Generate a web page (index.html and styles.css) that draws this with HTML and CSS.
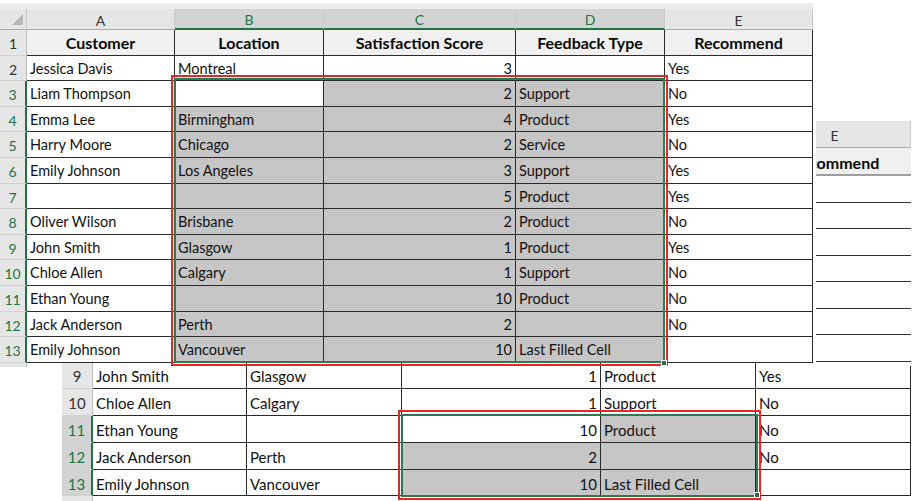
FILE: index.html
```html
<!DOCTYPE html>
<html lang="en">
<head>
<meta charset="utf-8">
<title>Excel selection composite</title>
<link rel="stylesheet" href="styles.css">
</head>
<body>
<div class="canvas">

  <!-- back screenshot (mostly hidden behind the top one) -->
  <div class="shot back-shot">
    <div class="grid back-grid">
      <div class="cell ch">E</div>
      <div class="cell th th-back">Recommend</div>
      <div class="cell brow"></div>
      <div class="cell brow"></div>
      <div class="cell brow"></div>
      <div class="cell brow"></div>
      <div class="cell brow"></div>
      <div class="cell brow"></div>
      <div class="cell brow"></div>
      <div class="cell brow stub-back"></div>
    </div>
  </div>

  <!-- bottom screenshot -->
  <div class="shot bottom-shot">
    <div class="grid bottom-grid">
      <div class="cell rh">9</div><div class="cell">John Smith</div><div class="cell">Glasgow</div><div class="cell num">1</div><div class="cell">Product</div><div class="cell">Yes</div>
      <div class="cell rh">10</div><div class="cell">Chloe Allen</div><div class="cell">Calgary</div><div class="cell num">1</div><div class="cell">Support</div><div class="cell">No</div>
      <div class="cell rh on">11</div><div class="cell">Ethan Young</div><div class="cell"></div><div class="cell num">10</div><div class="cell sel">Product</div><div class="cell">No</div>
      <div class="cell rh on">12</div><div class="cell">Jack Anderson</div><div class="cell">Perth</div><div class="cell num sel">2</div><div class="cell sel"></div><div class="cell">No</div>
      <div class="cell rh on">13</div><div class="cell">Emily Johnson</div><div class="cell">Vancouver</div><div class="cell num sel">10</div><div class="cell sel">Last Filled Cell</div><div class="cell"></div>
      <div class="cell rh stub"></div><div class="rest"></div>
    </div>
    <div class="redbox red-bottom"></div>
    <div class="greenbox green-bottom"></div>
    <div class="handle handle-bottom"></div>
  </div>

  <!-- top screenshot -->
  <div class="shot top-shot">
    <div class="grid top-grid">
      <div class="band"></div>
      <div class="cell ch corner"><svg width="11" height="11" viewBox="0 0 11 11"><polygon points="11,0 11,11 0,11" fill="#b8b8b8"/></svg></div>
      <div class="cell ch">A</div><div class="cell ch on">B</div><div class="cell ch on">C</div><div class="cell ch on">D</div><div class="cell ch">E</div>

      <div class="cell rh">1</div><div class="cell th">Customer</div><div class="cell th">Location</div><div class="cell th">Satisfaction Score</div><div class="cell th">Feedback Type</div><div class="cell th">Recommend</div>
      <div class="cell rh">2</div><div class="cell">Jessica Davis</div><div class="cell">Montreal</div><div class="cell num">3</div><div class="cell"></div><div class="cell">Yes</div>
      <div class="cell rh on">3</div><div class="cell">Liam Thompson</div><div class="cell"></div><div class="cell num sel">2</div><div class="cell sel">Support</div><div class="cell">No</div>
      <div class="cell rh on">4</div><div class="cell">Emma Lee</div><div class="cell sel">Birmingham</div><div class="cell num sel">4</div><div class="cell sel">Product</div><div class="cell">Yes</div>
      <div class="cell rh on">5</div><div class="cell">Harry Moore</div><div class="cell sel">Chicago</div><div class="cell num sel">2</div><div class="cell sel">Service</div><div class="cell">No</div>
      <div class="cell rh on">6</div><div class="cell">Emily Johnson</div><div class="cell sel">Los Angeles</div><div class="cell num sel">3</div><div class="cell sel">Support</div><div class="cell">Yes</div>
      <div class="cell rh on">7</div><div class="cell"></div><div class="cell sel"></div><div class="cell num sel">5</div><div class="cell sel">Product</div><div class="cell">Yes</div>
      <div class="cell rh on">8</div><div class="cell">Oliver Wilson</div><div class="cell sel">Brisbane</div><div class="cell num sel">2</div><div class="cell sel">Product</div><div class="cell">No</div>
      <div class="cell rh on">9</div><div class="cell">John Smith</div><div class="cell sel">Glasgow</div><div class="cell num sel">1</div><div class="cell sel">Product</div><div class="cell">Yes</div>
      <div class="cell rh on">10</div><div class="cell">Chloe Allen</div><div class="cell sel">Calgary</div><div class="cell num sel">1</div><div class="cell sel">Support</div><div class="cell">No</div>
      <div class="cell rh on">11</div><div class="cell">Ethan Young</div><div class="cell sel"></div><div class="cell num sel">10</div><div class="cell sel">Product</div><div class="cell">No</div>
      <div class="cell rh on">12</div><div class="cell">Jack Anderson</div><div class="cell sel">Perth</div><div class="cell num sel">2</div><div class="cell sel"></div><div class="cell">No</div>
      <div class="cell rh on">13</div><div class="cell">Emily Johnson</div><div class="cell sel">Vancouver</div><div class="cell num sel">10</div><div class="cell sel">Last Filled Cell</div><div class="cell"></div>
      <div class="cell rh stub"></div><div class="rest"></div>
    </div>
    <div class="edge"></div>
    <div class="redbox red-top"></div>
    <div class="greenbox green-top"></div>
    <div class="handle handle-top"></div>
  </div>

</div>
</body>
</html>
```

FILE: styles.css
```css
html, body {
  margin: 0;
  padding: 0;
  background: #ffffff;
}

body {
  font-family: Lato, "Open Sans", "Liberation Sans", sans-serif;
  color: #111;
}

.canvas {
  position: relative;
  width: 915px;
  height: 501px;
  overflow: hidden;
  background: #fff;
}

/* the three pasted screenshots sit on a free canvas */
.shot {
  position: absolute;
}

.top-shot {
  left: 0;
  top: 3px;
  z-index: 3;
}

.back-shot {
  left: 759px;
  top: 121px;
  z-index: 2;
}

.bottom-shot {
  left: 62px;
  top: 362px;
  z-index: 1;
}

.grid {
  display: grid;
}

.top-grid {
  grid-template-columns: 27px 148px 149px 192px 149px 148px;
  grid-template-rows: 6px 21px 26px 25px 26px 25px 26px 26px 25px 26px 25px 26px 26px 25px 26px 4px;
}

.bottom-grid {
  grid-template-columns: 31px 154px 155px 199px 155px 155px;
  grid-template-rows: 27px 27px 27px 27px 26px 5px;
}

.back-grid {
  width: 152px;
  grid-template-columns: 152px;
  grid-template-rows: 27px 28px 27px 26px 27px 26px 27px 26px 27px 4px;
}

.band {
  grid-column: 1 / -1;
  background: #ececec;
}

.rest {
  grid-column: 2 / -1;
}

/* thin white margin at the right edge of the top screenshot */
.edge {
  position: absolute;
  left: 813px;
  top: 27px;
  width: 3px;
  height: 337px;
  background: #ffffff;
}

.cell {
  box-sizing: border-box;
  border-right: 1px solid #2a2a2a;
  border-bottom: 1px solid #2a2a2a;
  background: #ffffff;
  padding: 0 3px;
  display: flex;
  align-items: center;
  font-size: 14.5px;
  line-height: 17px;
  color: #111;
  white-space: nowrap;
  overflow: hidden;
}

.bottom-grid .cell {
  font-size: 15px;
  line-height: 18px;
  padding-top: 2px;
}

.num {
  justify-content: flex-end;
}

.sel {
  background: #c6c6c6;
}

.th {
  background: #f0f0f0;
  font-weight: 700;
  justify-content: center;
  font-size: 16px;
  color: #0a0a0a;
}

/* column headers */
.ch {
  background: #e6e6e6;
  border-right: 1px solid #c9c9c9;
  border-bottom: 1px solid #ababab;
  justify-content: center;
  color: #333;
  font-size: 14px;
  padding-top: 2px;
}

.ch.on {
  background: #d3d3d3;
  color: #217346;
  border-bottom: 2px solid #217346;
}

.corner {
  align-items: flex-end;
  justify-content: flex-end;
  padding: 0 3px 4px 0;
}

.corner svg {
  display: block;
}

/* row headers */
.rh {
  background: #e6e6e6;
  border-right: 1px solid #bdbdbd;
  border-bottom: 1px solid #d2d2d2;
  justify-content: center;
  color: #333;
  font-size: 14px;
  padding: 2px 0 0 0;
}

.rh.on {
  color: #217346;
  border-right: 2px solid #217346;
}

.bottom-grid .rh {
  font-size: 15px;
}

.bottom-grid .rh.on {
  background: #d3d3d3;
}

.stub {
  border-bottom: 0;
}

/* back screenshot */
.th-back {
  border-right: 0;
  border-bottom: 2px solid #9e9e9e;
  padding-top: 2px;
}

.brow {
  border-right: 0;
  border-bottom: 1px solid #333;
}

.stub-back {
  border-bottom: 0;
}

/* selection overlays */
.redbox,
.greenbox,
.handle {
  position: absolute;
  box-sizing: border-box;
  pointer-events: none;
}

.redbox {
  border: 2px solid #e8262a;
}

.greenbox {
  border: 2px solid #2e7a50;
}

.handle {
  width: 6px;
  height: 6px;
  background: #217346;
  border: 1px solid #ffffff;
}

.red-top {
  left: 171px;
  top: 72px;
  width: 497px;
  height: 291px;
}

.green-top {
  left: 174px;
  top: 75px;
  width: 491px;
  height: 285px;
}

.handle-top {
  left: 661px;
  top: 357px;
}

.red-bottom {
  left: 336px;
  top: 48px;
  width: 363px;
  height: 90px;
}

.green-bottom {
  left: 339px;
  top: 52px;
  width: 357px;
  height: 83px;
}

.handle-bottom {
  left: 692px;
  top: 130px;
}
```
